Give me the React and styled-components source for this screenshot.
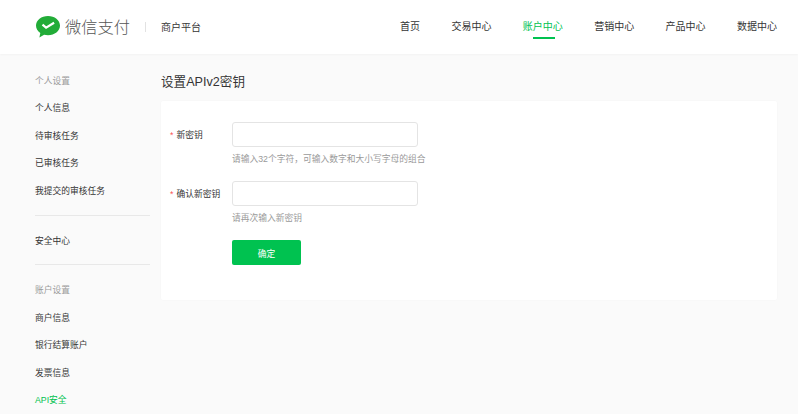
import React from "react";
import styled, { createGlobalStyle } from "styled-components";

const GlobalStyle = createGlobalStyle`
    html, body {
        margin: 0;
        height: 414px;
        overflow: hidden;
        background: #fafafa;
        font-family: "Liberation Sans", "Noto Sans CJK SC", sans-serif;
    }
`;

const Page = styled.div`
    height: 414px;
    overflow: hidden;
`;

const Header = styled.header`
    height: 54px;
    background: #fff;
    box-shadow: 0 1px 2px rgba(0, 0, 0, 0.03);
    display: flex;
    align-items: center;
    padding: 0 21px 0 36px;
`;

const Brand = styled.div`
    display: flex;
    align-items: center;
    gap: 5px;
`;

const BrandName = styled.span`
    font-size: 16.25px;
    font-weight: 300;
    color: #555;
    line-height: 20px;
`;

const BrandDivider = styled.span`
    width: 1px;
    height: 10px;
    background: #e2e2e2;
    margin: 0 15px 0 15px;
`;

const Platform = styled.span`
    font-size: 10px;
    color: #353535;
    margin-bottom: 2px;
`;

const Nav = styled.nav`
    margin-left: auto;
    display: flex;
    gap: 31.4px;
    height: 100%;
`;

const NavItem = styled.a`
    position: relative;
    font-size: 10px;
    line-height: 54px;
    color: ${(p) => (p.$active ? "#00c250" : "#353535")};

    &::after {
        content: "";
        display: ${(p) => (p.$active ? "block" : "none")};
        position: absolute;
        left: 10px;
        width: 22px;
        top: 37px;
        height: 2px;
        background: #00c250;
    }
`;

const Body = styled.div`
    display: flex;
    padding: 12px 21px 0 35px;
    gap: 11px;
`;

const Sidebar = styled.aside`
    width: 115px;
    flex: none;
    padding-top: 2px;
`;

const SideGroup = styled.div`
    padding-bottom: ${(p) => p.$pad}px;
    border-bottom: 1px solid #e8e8e8;
    margin-bottom: 12px;

    &:last-child {
        padding-bottom: 0;
        margin-bottom: 0;
        border-bottom: none;
    }
`;

const SideTitle = styled.div`
    font-size: 8.75px;
    line-height: 27.4px;
    color: #9a9a9a;
`;

const SideItem = styled.div`
    font-size: 8.75px;
    line-height: 27.4px;
    color: ${(p) => (p.$active ? "#00c250" : "#353535")};
`;

const Main = styled.main`
    flex: 1;
`;

const PageTitle = styled.h1`
    margin: 0;
    font-size: 12.6px;
    font-weight: 400;
    line-height: 20px;
    padding: 6px 0 9px;
    color: #353535;
`;

const Card = styled.section`
    background: #fff;
    height: 199px;
    box-sizing: border-box;
    border-radius: 2px;
    box-shadow: 0 0 2px rgba(0, 0, 0, 0.03);
    padding: 21px 0 0 9px;
`;

const Row = styled.div`
    display: flex;
    margin-bottom: 16px;
`;

const Label = styled.label`
    width: 62px;
    flex: none;
    font-size: 8.75px;
    line-height: 25px;
    padding-top: 1px;
    color: #353535;
`;

const Star = styled.span`
    color: #fa5151;
    margin-right: 3px;
`;

const Field = styled.div`
    display: flex;
    flex-direction: column;
`;

const Input = styled.input`
    width: 186px;
    height: 25px;
    box-sizing: border-box;
    border: 1px solid #e4e4e4;
    border-radius: 3px;
    background: #fff;
    outline: none;
`;

const Hint = styled.div`
    font-size: 8.75px;
    line-height: 12px;
    margin-top: 6px;
    color: #9a9a9a;
`;

const Submit = styled.button`
    display: block;
    margin-left: 62px;
    width: 69px;
    height: 25px;
    border: none;
    border-radius: 2px;
    background: #00c250;
    color: #fff;
    font-family: inherit;
    font-size: 8.75px;
    padding: 1px 0 0;
`;

const WechatPayLogo = () => (
    <svg width="24" height="22" viewBox="0 0 24 22">
        <path
            fill="#22ac38"
            d="M12 0C5.4 0 0 4.2 0 9.6c0 3 1.7 5.6 4.3 7.4L3.4 21.4l4.7-2.6c1.2.3 2.5.5 3.9.5 6.6 0 12-4.3 12-9.7S18.600 0 12 0z"
        />
        <path
            fill="none"
            stroke="#fff"
            strokeWidth="2.200"
            d="M6.500 8.600l3.600 3 8-4.800"
        />
    </svg>
);

const navItems = ["首页", "交易中心", "账户中心", "营销中心", "产品中心", "数据中心"];

export default function App() {
    return (
        <Page>
            <GlobalStyle />
            <Header>
                <Brand>
                    <WechatPayLogo />
                    <BrandName>微信支付</BrandName>
                </Brand>
                <BrandDivider />
                <Platform>商户平台</Platform>
                <Nav>
                    {navItems.map((item) => (
                        <NavItem key={item} $active={item === "账户中心"}>
                            {item}
                        </NavItem>
                    ))}
                </Nav>
            </Header>
            <Body>
                <Sidebar>
                    <SideGroup $pad={10}>
                        <SideTitle>个人设置</SideTitle>
                        <SideItem>个人信息</SideItem>
                        <SideItem>待审核任务</SideItem>
                        <SideItem>已审核任务</SideItem>
                        <SideItem>我提交的审核任务</SideItem>
                    </SideGroup>
                    <SideGroup $pad={9}>
                        <SideItem>安全中心</SideItem>
                    </SideGroup>
                    <SideGroup>
                        <SideTitle>账户设置</SideTitle>
                        <SideItem>商户信息</SideItem>
                        <SideItem>银行结算账户</SideItem>
                        <SideItem>发票信息</SideItem>
                        <SideItem $active>API安全</SideItem>
                    </SideGroup>
                </Sidebar>
                <Main>
                    <PageTitle>设置APIv2密钥</PageTitle>
                    <Card>
                        <Row>
                            <Label><Star>*</Star>新密钥</Label>
                            <Field>
                                <Input />
                                <Hint>请输入32个字符，可输入数字和大小写字母的组合</Hint>
                            </Field>
                        </Row>
                        <Row>
                            <Label><Star>*</Star>确认新密钥</Label>
                            <Field>
                                <Input />
                                <Hint>请再次输入新密钥</Hint>
                            </Field>
                        </Row>
                        <Submit>确定</Submit>
                    </Card>
                </Main>
            </Body>
        </Page>
    );
}
